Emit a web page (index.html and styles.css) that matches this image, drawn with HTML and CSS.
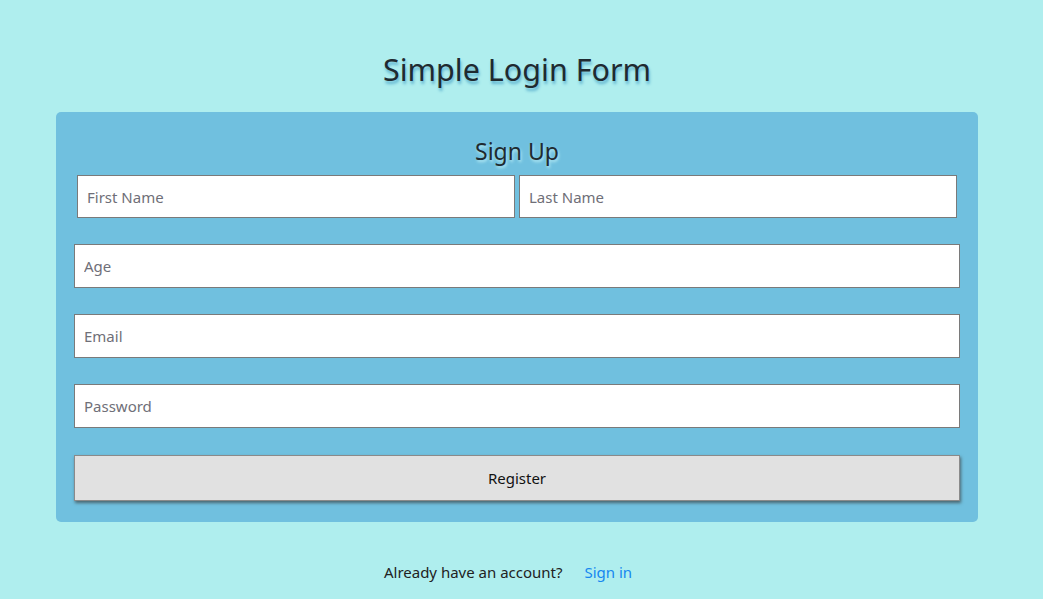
FILE: index.html
```html
<!DOCTYPE html>
<html>
<head>
<meta charset="utf-8">
<link rel="stylesheet" href="styles.css">
</head>
<body>
<div class="page">
  <h1 class="title">Simple Login Form</h1>
  <form class="card">
    <h2 class="card-title">Sign Up</h2>
    <div class="name-row">
      <input class="field" type="text" placeholder="First Name">
      <input class="field" type="text" placeholder="Last Name">
    </div>
    <input class="field wide" type="text" placeholder="Age">
    <input class="field wide" type="text" placeholder="Email">
    <input class="field wide" type="password" placeholder="Password">
    <button class="register" type="button">Register</button>
  </form>
  <p class="footer">Already have an account? <a class="link" href="#">Sign in</a></p>
</div>
</body>
</html>
```
FILE: styles.css
```css
html, body {
  margin: 0;
  padding: 0;
  background: #afeeee;
  font-family: "Noto Sans", "Open Sans", sans-serif;
  color: #222;
}
.page {
  width: 922px;
  margin-left: 56px;
  padding-top: 46px;
}
.title {
  margin: 0;
  text-align: center;
  font-weight: 400;
  font-size: 30.5px;
  line-height: 46px;
  color: #1f2a30;
  text-shadow: 1px 3px 3px #5fb3d0;
}
.card {
  margin-top: 20px;
  background: #70c0df;
  border-radius: 5px;
  padding: 20px 18px 21px;
  display: flex;
  flex-direction: column;
}
.card-title {
  margin: 0;
  text-align: center;
  font-weight: 400;
  font-size: 23px;
  line-height: 38px;
  color: #1f2a30;
  text-shadow: 1px 2px 3px #b8ecf5;
}
.name-row {
  display: flex;
  gap: 4px;
  padding: 5px 3px 0;
}
.field {
  box-sizing: border-box;
  height: 43px;
  border: 1px solid #7a7a7a;
  background: #fff;
  padding: 0 9px;
  font-family: inherit;
  font-size: 15px;
  color: #333;
  outline: none;
}
.name-row .field {
  flex: 1;
  min-width: 0;
}
.field::placeholder {
  color: #6f6f78;
}
.field.wide {
  height: 44px;
  margin-top: 26px;
}
.register {
  margin-top: 27px;
  height: 46px;
  background: #e1e1e1;
  border: 1px solid #8a8a8a;
  box-shadow: 1px 2px 3px #4a6670;
  font-family: inherit;
  font-size: 15px;
  color: #111;
}
.footer {
  margin: 40px 0 0;
  text-align: center;
  font-size: 15px;
  color: #222;
  padding-right: 18px;
}
.link {
  margin-left: 18px;
  color: #1687f0;
  text-decoration: none;
}
```
